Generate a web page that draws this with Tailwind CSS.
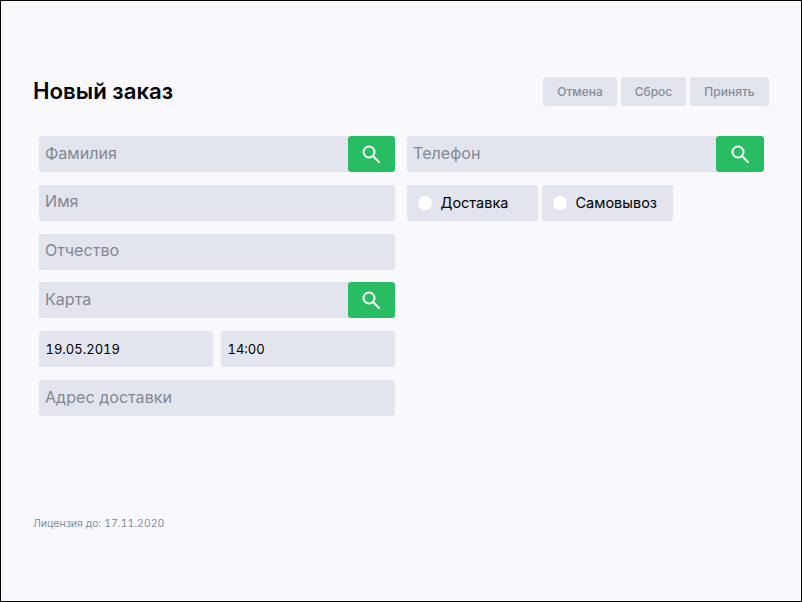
<!DOCTYPE html>
<html lang="ru">
<head>
  <meta charset="UTF-8" />
  <title>Новый заказ</title>
  <script src="https://cdn.jsdelivr.net/npm/@tailwindcss/browser@4"></script>
</head>
<body class="w-[802px] h-[602px] overflow-hidden bg-black font-['Inter',sans-serif]">
  <div class="m-px w-[800px] h-[600px] bg-[#f9f9fd] flex flex-col pl-[32px] pr-[32px] pt-[76px]">

    <header class="flex items-center justify-between h-[29px]">
      <h1 class="mb-[1px] text-[22.2px] font-semibold leading-none text-black">Новый заказ</h1>
      <div class="flex gap-[4px]">
        <button class="w-[74px] h-[29px] rounded-[3px] bg-[#e2e5ee] text-[#868c97] text-[12px] font-medium">Отмена</button>
        <button class="w-[65px] h-[29px] rounded-[3px] bg-[#e2e5ee] text-[#868c97] text-[12px] font-medium">Сброс</button>
        <button class="w-[79px] h-[29px] rounded-[3px] bg-[#e2e5ee] text-[#868c97] text-[12px] font-medium">Принять</button>
      </div>
    </header>

    <main class="flex gap-[12px] pl-[6px] mt-[30px]">
      <section class="w-[356px] flex flex-col gap-[12.8px]">
        <div class="flex h-[36px]">
          <input placeholder="Фамилия" class="flex-1 min-w-0 px-[6px] pb-[2px] rounded-l-[3px] bg-[#e2e5ee] text-[16.1px] placeholder:text-[#828893] outline-none" />
          <button class="w-[47.5px] rounded-[3px] bg-[#28bd62] flex items-center justify-center">
            <svg class="w-[20px] h-[20px]" viewBox="0 0 20 20" fill="none" stroke="#fff" stroke-width="2" stroke-linecap="round"><circle cx="8" cy="8" r="5.5"/><path d="M12 12l6 6"/></svg>
          </button>
        </div>
        <input placeholder="Имя" class="h-[36px] px-[6px] pb-[3px] rounded-[3px] bg-[#e2e5ee] text-[16.1px] placeholder:text-[#828893] outline-none" />
        <input placeholder="Отчество" class="h-[36px] px-[6px] pb-[3px] rounded-[3px] bg-[#e2e5ee] text-[16.1px] placeholder:text-[#828893] outline-none" />
        <div class="flex h-[36px]">
          <input placeholder="Карта" class="flex-1 min-w-0 px-[6px] pb-[2px] rounded-l-[3px] bg-[#e2e5ee] text-[16.1px] placeholder:text-[#828893] outline-none" />
          <button class="w-[47.5px] rounded-[3px] bg-[#28bd62] flex items-center justify-center">
            <svg class="w-[20px] h-[20px]" viewBox="0 0 20 20" fill="none" stroke="#fff" stroke-width="2" stroke-linecap="round"><circle cx="8" cy="8" r="5.5"/><path d="M12 12l6 6"/></svg>
          </button>
        </div>
        <div class="flex gap-[8px] h-[36px]">
          <input value="19.05.2019" class="w-[174px] pl-[6.5px] pr-[7px] pt-[1px] rounded-[3px] bg-[#e2e5ee] text-[13px] tabular-nums text-black outline-none" />
          <input value="14:00" class="w-[174px] pl-[6.5px] pr-[7px] pt-[1px] rounded-[3px] bg-[#e2e5ee] text-[13px] tabular-nums text-black outline-none" />
        </div>
        <input placeholder="Адрес доставки" class="h-[36px] px-[6px] pb-[2px] rounded-[3px] bg-[#e2e5ee] text-[16.1px] placeholder:text-[#828893] outline-none" />
      </section>

      <section class="w-[357px] flex flex-col gap-[12.8px]">
        <div class="flex h-[36px]">
          <input placeholder="Телефон" class="flex-1 min-w-0 px-[6px] pb-[2px] rounded-l-[3px] bg-[#e2e5ee] text-[16.1px] placeholder:text-[#828893] outline-none" />
          <button class="w-[48px] rounded-[3px] bg-[#28bd62] flex items-center justify-center">
            <svg class="w-[20px] h-[20px]" viewBox="0 0 20 20" fill="none" stroke="#fff" stroke-width="2" stroke-linecap="round"><circle cx="8" cy="8" r="5.5"/><path d="M12 12l6 6"/></svg>
          </button>
        </div>
        <div class="flex gap-[4px] h-[36px]">
          <label class="w-[131px] flex items-center pl-[10.5px] gap-[9px] rounded-[3px] bg-[#e2e5ee] text-[14.5px] text-black">
            <span class="w-[14px] h-[14px] rounded-full bg-white"></span><span class="pt-[1px]">Доставка</span>
          </label>
          <label class="w-[131px] flex items-center pl-[10.5px] gap-[9px] rounded-[3px] bg-[#e2e5ee] text-[14.5px] text-black">
            <span class="w-[14px] h-[14px] rounded-full bg-white"></span><span class="pt-[1px]">Самовывоз</span>
          </label>
        </div>
      </section>
    </main>

    <footer class="mt-[101px] text-[10.5px] leading-[14px] tabular-nums text-[#868c97]">Лицензия до: 17.11.2020</footer>
  </div>
</body>
</html>
